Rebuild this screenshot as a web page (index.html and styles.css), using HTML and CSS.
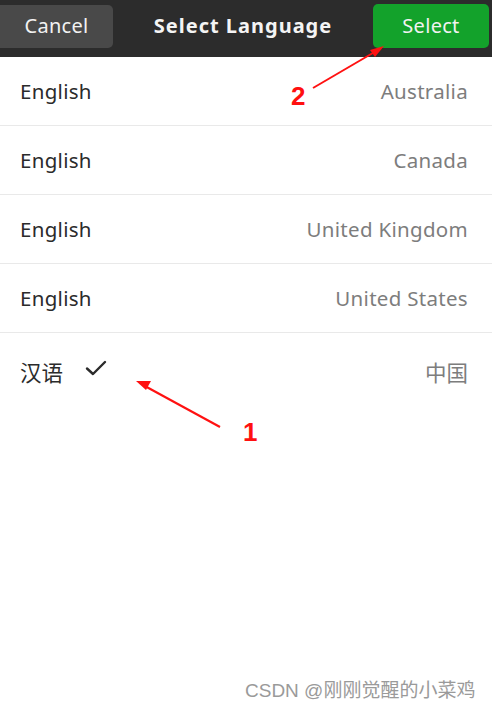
FILE: index.html
```
<!DOCTYPE html>
<html lang="zh">
<head>
    <meta charset="UTF-8">
    <meta name="viewport" content="width=device-width, initial-scale=1.0">
    <title>Select Language</title>
    <link rel="stylesheet" href="styles.css">
</head>
<body>
    <div class="screen">
        <div class="header">
            <button class="btn btn-cancel">Cancel</button>
            <div class="title">Select Language</div>
            <button class="btn btn-select">Select</button>
        </div>

        <ul class="lang-list">
            <li class="lang-row">
                <span class="lang-name">English</span>
                <span class="lang-region">Australia</span>
            </li>
            <li class="lang-row">
                <span class="lang-name">English</span>
                <span class="lang-region">Canada</span>
            </li>
            <li class="lang-row">
                <span class="lang-name">English</span>
                <span class="lang-region">United Kingdom</span>
            </li>
            <li class="lang-row">
                <span class="lang-name">English</span>
                <span class="lang-region">United States</span>
            </li>
            <li class="lang-row selected">
                <span class="lang-name cjk">汉语
                    <svg class="check" width="22" height="18" viewBox="0 0 22 18">
                        <path d="M2 9.5 L8 15 L20 3" fill="none" stroke="#2b2b2b" stroke-width="2.4" stroke-linecap="round" stroke-linejoin="round"/>
                    </svg>
                </span>
                <span class="lang-region cjk">中国</span>
            </li>
        </ul>

        <!-- annotations drawn over the screenshot -->
        <svg class="marks" width="492" height="706" viewBox="0 0 492 706">
            <line x1="313" y1="88" x2="378" y2="50" stroke="#f11" stroke-width="2"/>
            <polygon points="384,46 370,50 375,57" fill="#f11"/>
            <line x1="220" y1="427" x2="143" y2="385" stroke="#f11" stroke-width="2.2"/>
            <polygon points="136,381 151,381 146,390" fill="#f11"/>
        </svg>
        <span class="mark-num num-2">2</span>
        <span class="mark-num num-1">1</span>

        <div class="watermark">CSDN @刚刚觉醒的小菜鸡</div>
    </div>
</body>
</html>
```

FILE: styles.css
```
body {
    margin: 0;
    background: #ffffff;
    font-family: "Noto Sans", "Noto Sans CJK SC", sans-serif;
}
.screen {
    position: relative;
    width: 492px;
    height: 706px;
    overflow: hidden;
}
.header {
    display: flex;
    align-items: flex-start;
    justify-content: space-between;
    height: 57px;
    padding: 4px 3px 0 0;
    background: #2c2c2c;
    box-sizing: border-box;
}
.btn {
    height: 43px;
    border: none;
    border-radius: 5px;
    font-family: inherit;
    font-size: 20px;
    color: #f2f2f2;
    padding: 0 0 2px 0;
    letter-spacing: 0.3px;
}
.btn-cancel {
    width: 113px;
    margin-top: 1px;
    background: #494949;
    border-radius: 0 5px 5px 0;
}
.btn-select {
    width: 116px;
    height: 44px;
    background: #13a22b;
}
.title {
    font-size: 20px;
    font-weight: bold;
    color: #f4f4f4;
    letter-spacing: 1px;
    margin: 8px 0 0 0;
}
.lang-list {
    list-style: none;
    margin: 0;
    padding: 0;
}
.lang-row {
    display: flex;
    align-items: center;
    justify-content: space-between;
    height: 69px;
    padding: 0 24px 0 20px;
    border-bottom: 1px solid #e9e9e9;
    box-sizing: border-box;
}
.lang-row.selected {
    height: 80px;
    border-bottom: none;
    padding-bottom: 4px;
}
.lang-name {
    display: flex;
    align-items: center;
    gap: 22px;
    font-size: 20.5px;
    color: #2b2b2b;
    letter-spacing: 0.3px;
}
.lang-region {
    font-size: 20.5px;
    color: #7d7d7d;
    letter-spacing: 0.3px;
}
.cjk {
    font-size: 21.5px;
    letter-spacing: 0;
}
.check {
    margin-top: -6px;
}
.marks {
    position: absolute;
    left: 0;
    top: 0;
    pointer-events: none;
}
.mark-num {
    position: absolute;
    font-family: "Liberation Sans", sans-serif;
    font-weight: bold;
    font-size: 26px;
    color: #ff1010;
}
.num-2 {
    left: 291px;
    top: 81px;
}
.num-1 {
    left: 243px;
    top: 417px;
}
.watermark {
    position: absolute;
    left: 245px;
    top: 675px;
    font-family: "Liberation Sans", "Noto Sans CJK SC", sans-serif;
    font-size: 19px;
    color: #9a9a9a;
    text-shadow: 0 0 2px #ffffff;
}
```
